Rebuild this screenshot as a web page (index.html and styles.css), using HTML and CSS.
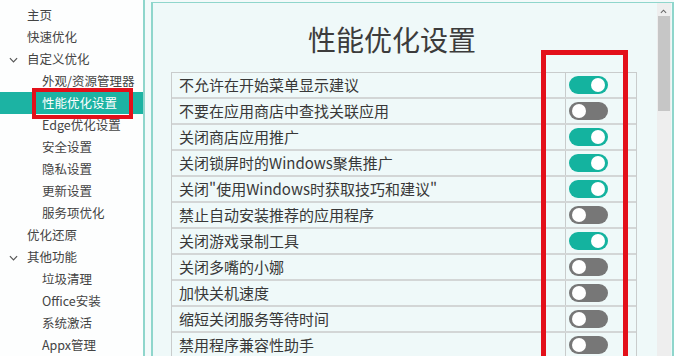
FILE: index.html
```html
<!DOCTYPE html>
<html lang="zh">
<head>
<meta charset="utf-8">
<link rel="stylesheet" href="styles.css">
</head>
<body>
<div class="app">
  <nav class="sidebar">
    <div class="item top">主页</div>
    <div class="item top">快速优化</div>
    <div class="item top"><svg class="chev" viewBox="0 0 10 6" width="9" height="6"><path d="M1 1 L5 5 L9 1" fill="none" stroke="#555" stroke-width="1.3"/></svg>自定义优化</div>
    <div class="item child">外观/资源管理器</div>
    <div class="item child selected">性能优化设置<span class="mark"></span></div>
    <div class="item child">Edge优化设置</div>
    <div class="item child">安全设置</div>
    <div class="item child">隐私设置</div>
    <div class="item child">更新设置</div>
    <div class="item child">服务项优化</div>
    <div class="item top">优化还原</div>
    <div class="item top"><svg class="chev" viewBox="0 0 10 6" width="9" height="6"><path d="M1 1 L5 5 L9 1" fill="none" stroke="#555" stroke-width="1.3"/></svg>其他功能</div>
    <div class="item child">垃圾清理</div>
    <div class="item child">Office安装</div>
    <div class="item child">系统激活</div>
    <div class="item child">Appx管理</div>
  </nav>
  <main class="panel">
    <div class="content">
      <h1 class="title">性能优化设置</h1>
      <div class="table">
        <div class="row"><div class="label">不允许在开始菜单显示建议</div><div class="cell"><span class="toggle on"></span></div></div>
        <div class="row"><div class="label">不要在应用商店中查找关联应用</div><div class="cell"><span class="toggle"></span></div></div>
        <div class="row"><div class="label">关闭商店应用推广</div><div class="cell"><span class="toggle on"></span></div></div>
        <div class="row"><div class="label">关闭锁屏时的Windows聚焦推广</div><div class="cell"><span class="toggle on"></span></div></div>
        <div class="row"><div class="label">关闭"使用Windows时获取技巧和建议"</div><div class="cell"><span class="toggle on"></span></div></div>
        <div class="row"><div class="label">禁止自动安装推荐的应用程序</div><div class="cell"><span class="toggle"></span></div></div>
        <div class="row"><div class="label">关闭游戏录制工具</div><div class="cell"><span class="toggle on"></span></div></div>
        <div class="row"><div class="label">关闭多嘴的小娜</div><div class="cell"><span class="toggle"></span></div></div>
        <div class="row"><div class="label">加快关机速度</div><div class="cell"><span class="toggle"></span></div></div>
        <div class="row"><div class="label">缩短关闭服务等待时间</div><div class="cell"><span class="toggle"></span></div></div>
        <div class="row"><div class="label">禁用程序兼容性助手</div><div class="cell"><span class="toggle"></span></div></div>
      </div>
      <div class="highlight"></div>
    </div>
    <div class="scrollbar">
      <svg class="arrow" viewBox="0 0 8 5" width="7" height="5"><path d="M1 4 L4 1 L7 4" fill="none" stroke="#666" stroke-width="1.2"/></svg>
      <div class="thumb"></div>
    </div>
  </main>
</div>
</body>
</html>
```

FILE: styles.css
```css
* { box-sizing: border-box; }
html, body { margin: 0; padding: 0; }
body {
  width: 674px;
  height: 356px;
  overflow: hidden;
  background: #f3fafa;
  font-family: "Noto Sans CJK SC", "Noto Sans", sans-serif;
  color: #3a3a3a;
}
.app {
  display: flex;
  height: 356px;
  gap: 6px;
}
.sidebar {
  width: 145px;
  flex: none;
  background: #fdfefe;
  border-right: 2px solid #8fd6cc;
  padding-top: 4px;
}
.item {
  position: relative;
  height: 22px;
  line-height: 22px;
  font-size: 12.5px;
  color: #444;
  white-space: nowrap;
  display: flex;
  align-items: center;
}
.item.top { padding-left: 27px; }
.item.child { padding-left: 42px; }
.chev {
  position: absolute;
  left: 9px;
  top: 9px;
}
.item.selected {
  background: #1cb3a3;
  color: #fff;
}
.mark {
  position: absolute;
  left: 32px;
  top: -4px;
  width: 101px;
  height: 31px;
  border: 4px solid #e3101a;
}
.panel {
  flex: 1;
  margin-top: 2px;
  border-left: 2px solid #8fd6cc;
  border-top: 1px solid #8fd6cc;
  border-right: 2px solid #8fd6cc;
  background: #eff9f9;
  display: flex;
  overflow: hidden;
}
.content {
  position: relative;
  flex: 1;
  padding: 0 20px 0 18px;
}
.title {
  margin: 0;
  padding-top: 17px;
  padding-right: 24px;
  height: 69px;
  line-height: 38px;
  text-align: center;
  font-size: 28px;
  font-weight: 400;
  color: #3c3c3c;
}
.table {
  border: 1px solid #c9cccc;
  border-bottom: none;
}
.row {
  display: flex;
  height: 26px;
  border-bottom: 2px solid #d3d6d6;
}
.label {
  flex: 1;
  padding-left: 7px;
  font-size: 15px;
  line-height: 24px;
  color: #383838;
  white-space: nowrap;
  border-right: 1px solid #c9cccc;
}
.cell {
  width: 70px;
  display: flex;
  align-items: center;
  padding-left: 3px;
}
.toggle {
  position: relative;
  width: 39px;
  height: 18px;
  border-radius: 9px;
  background: #777;
}
.toggle::after {
  content: "";
  position: absolute;
  top: 2px;
  left: 3px;
  width: 14px;
  height: 14px;
  border-radius: 50%;
  background: #fff;
}
.toggle.on { background: #14b39f; }
.toggle.on::after { left: 22px; }
.highlight {
  position: absolute;
  left: 388px;
  top: 47px;
  width: 87px;
  height: 320px;
  border: 5px solid #e3101a;
}
.scrollbar {
  width: 14px;
  flex: none;
  background: #eeeeee;
  position: relative;
  margin-right: 1px;
}
.arrow {
  position: absolute;
  left: 3px;
  top: 6px;
}
.thumb {
  position: absolute;
  left: 1px;
  right: 1px;
  top: 13px;
  height: 95px;
  background: #c6c6c6;
}
```
